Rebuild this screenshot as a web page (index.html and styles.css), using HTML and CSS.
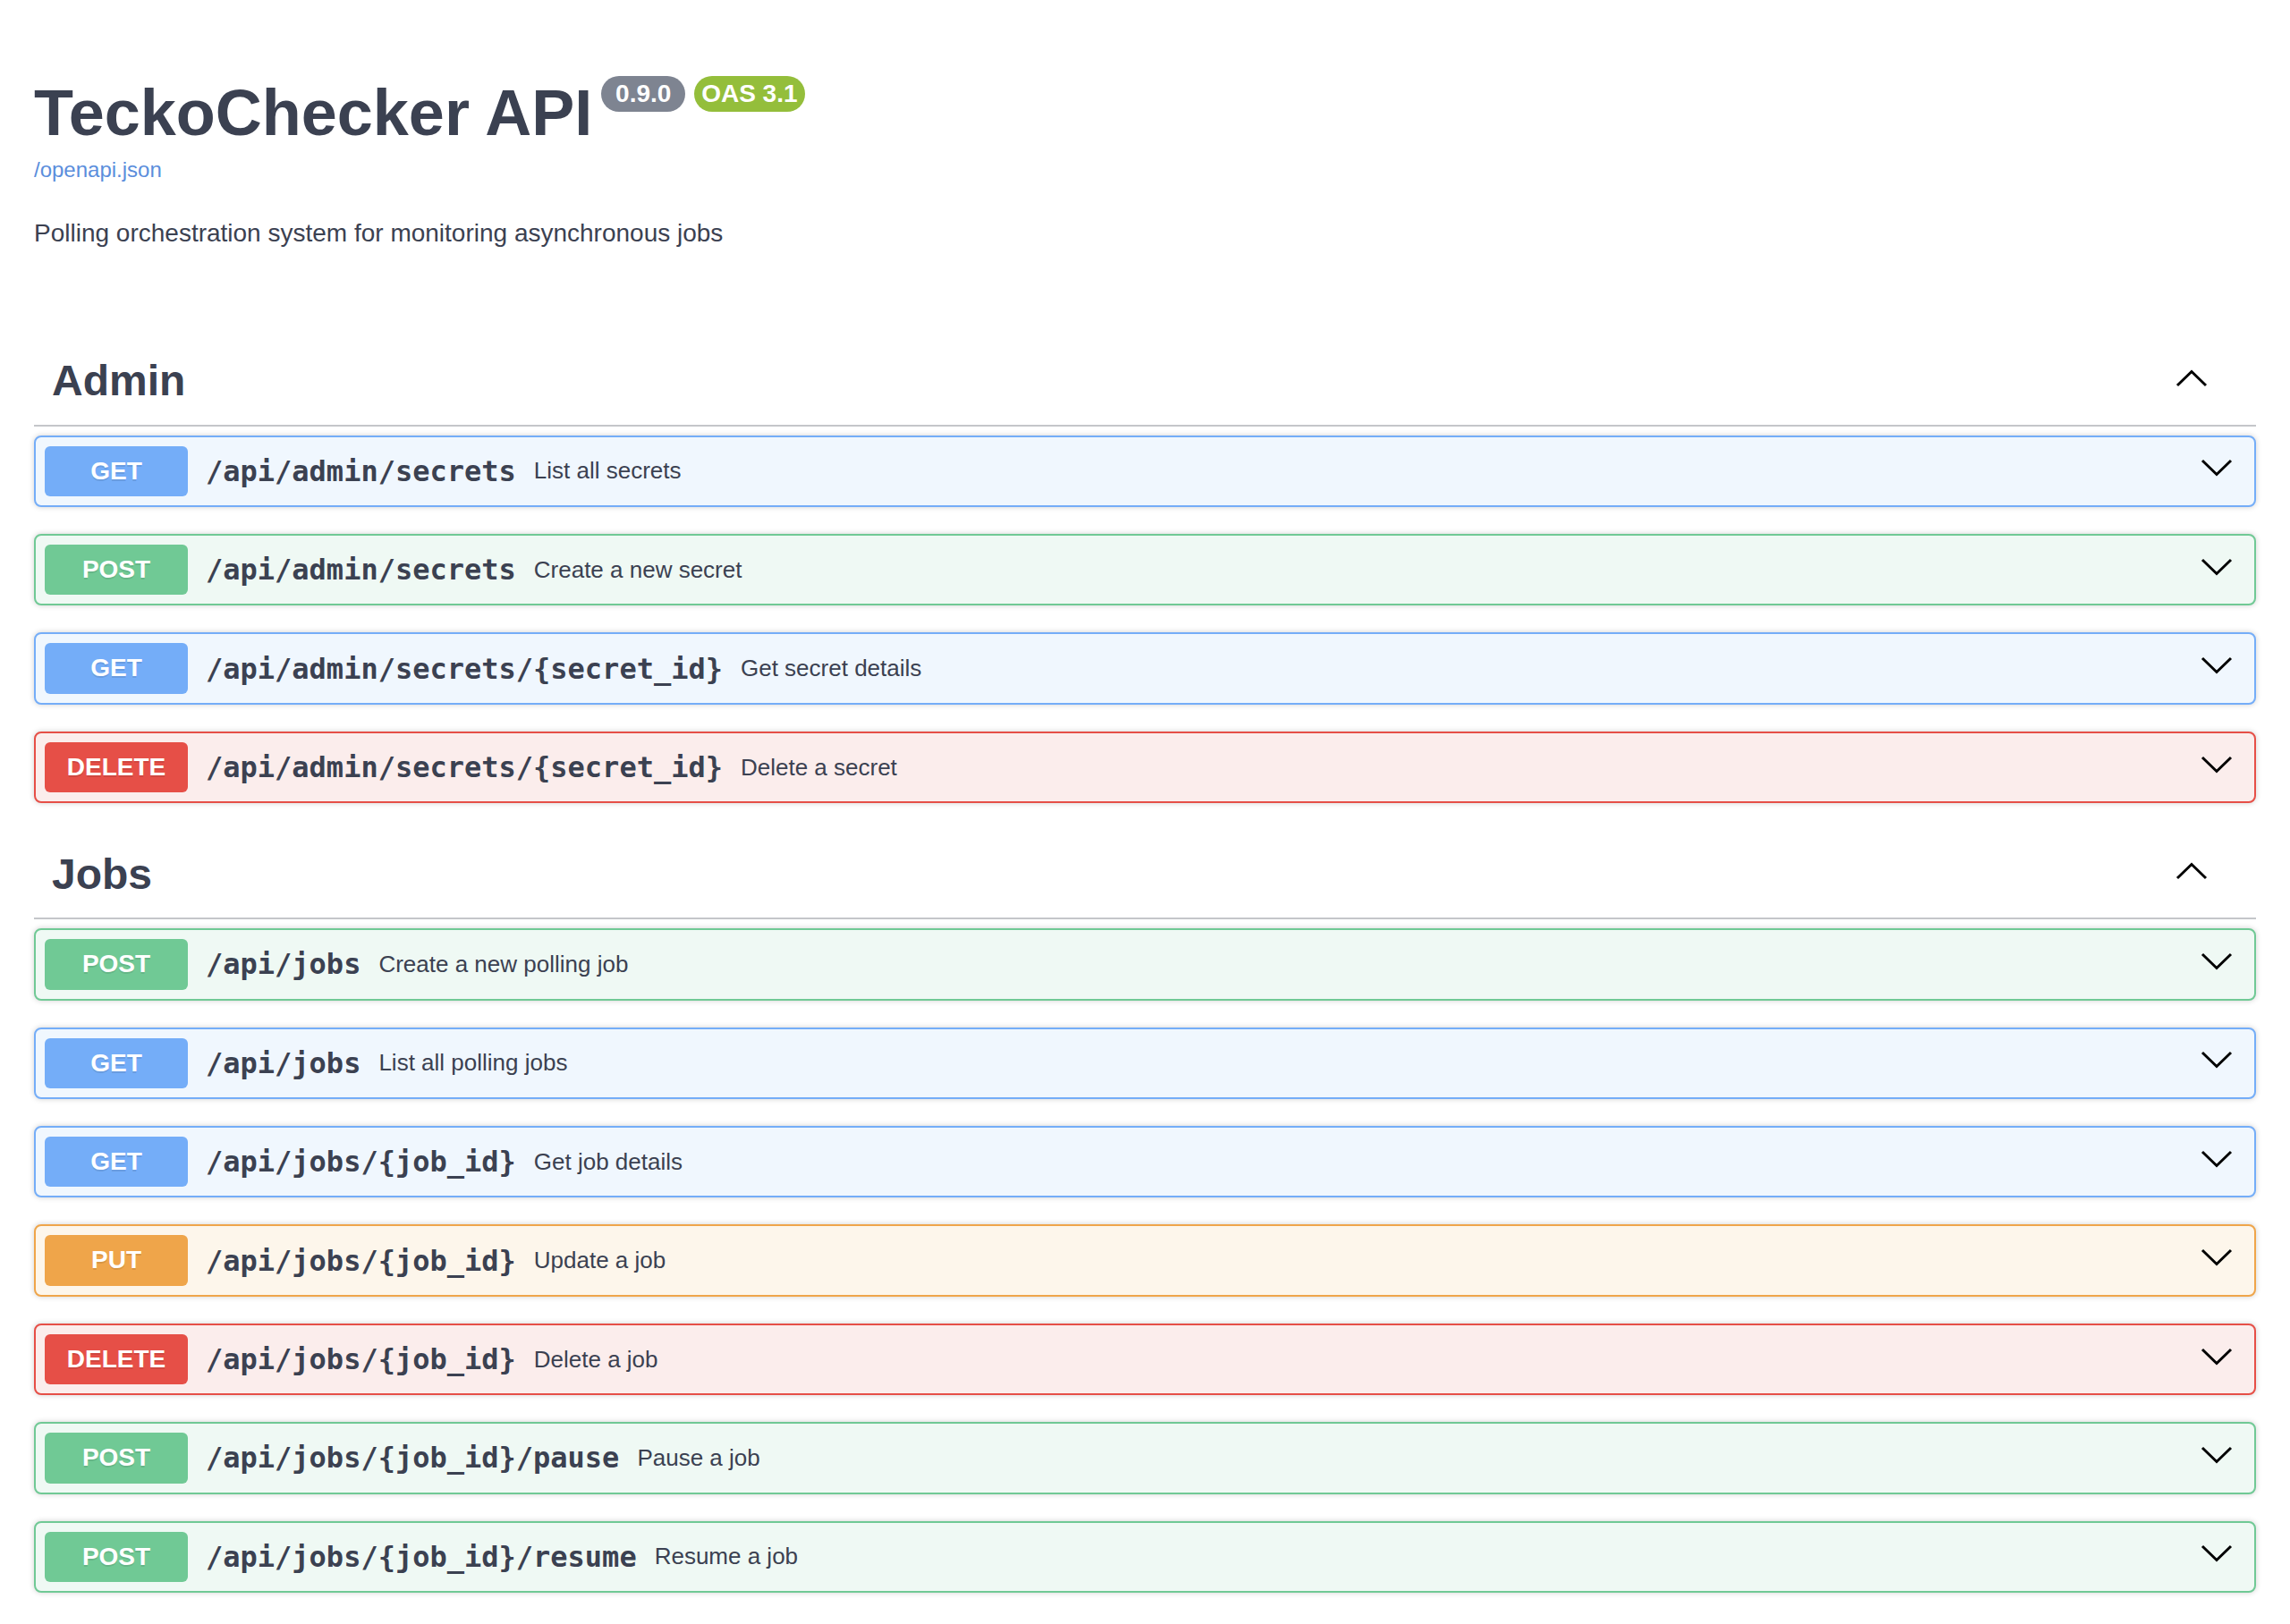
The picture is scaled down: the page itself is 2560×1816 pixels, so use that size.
FILE: index.html
```html
<!DOCTYPE html>
<html lang="en">
<head>
<meta charset="utf-8">
<title>TeckoChecker API - Swagger UI</title>
<link rel="stylesheet" href="styles.css">
</head>
<body>
<div class="wrapper">
  <section class="info">
    <hgroup class="main">
      <h2 class="title"><span class="title-text">TeckoChecker API</span><span class="badges"><small class="badge badge-version"><pre> 0.9.0 </pre></small><small class="badge badge-stamp"><pre>OAS 3.1</pre></small></span></h2>
      <a class="link" href="#">/openapi.json</a>
    </hgroup>
    <div class="description"><p>Polling orchestration system for monitoring asynchronous jobs</p></div>
  </section>

  <div class="tag-section">
    <h3 class="tag"><span class="tag-name">Admin</span><button class="tag-toggle" aria-label="Collapse"><svg class="arrow-up" width="36" height="20" viewBox="0 0 36 20"><polyline points="2,18 18,2.5 34,18"/></svg></button></h3>
    <div class="ops">
      <div class="op op-get"><span class="method">GET</span><span class="path">/api/admin/secrets</span><span class="desc">List all secrets</span><svg class="arrow-down" width="36" height="20" viewBox="0 0 36 20"><polyline points="2,2 18,17.5 34,2"/></svg></div>
      <div class="op op-post"><span class="method">POST</span><span class="path">/api/admin/secrets</span><span class="desc">Create a new secret</span><svg class="arrow-down" width="36" height="20" viewBox="0 0 36 20"><polyline points="2,2 18,17.5 34,2"/></svg></div>
      <div class="op op-get"><span class="method">GET</span><span class="path">/api/admin/secrets/{secret_id}</span><span class="desc">Get secret details</span><svg class="arrow-down" width="36" height="20" viewBox="0 0 36 20"><polyline points="2,2 18,17.5 34,2"/></svg></div>
      <div class="op op-delete"><span class="method">DELETE</span><span class="path">/api/admin/secrets/{secret_id}</span><span class="desc">Delete a secret</span><svg class="arrow-down" width="36" height="20" viewBox="0 0 36 20"><polyline points="2,2 18,17.5 34,2"/></svg></div>
    </div>
  </div>

  <div class="tag-section">
    <h3 class="tag"><span class="tag-name">Jobs</span><button class="tag-toggle" aria-label="Collapse"><svg class="arrow-up" width="36" height="20" viewBox="0 0 36 20"><polyline points="2,18 18,2.5 34,18"/></svg></button></h3>
    <div class="ops">
      <div class="op op-post"><span class="method">POST</span><span class="path">/api/jobs</span><span class="desc">Create a new polling job</span><svg class="arrow-down" width="36" height="20" viewBox="0 0 36 20"><polyline points="2,2 18,17.5 34,2"/></svg></div>
      <div class="op op-get"><span class="method">GET</span><span class="path">/api/jobs</span><span class="desc">List all polling jobs</span><svg class="arrow-down" width="36" height="20" viewBox="0 0 36 20"><polyline points="2,2 18,17.5 34,2"/></svg></div>
      <div class="op op-get"><span class="method">GET</span><span class="path">/api/jobs/{job_id}</span><span class="desc">Get job details</span><svg class="arrow-down" width="36" height="20" viewBox="0 0 36 20"><polyline points="2,2 18,17.5 34,2"/></svg></div>
      <div class="op op-put"><span class="method">PUT</span><span class="path">/api/jobs/{job_id}</span><span class="desc">Update a job</span><svg class="arrow-down" width="36" height="20" viewBox="0 0 36 20"><polyline points="2,2 18,17.5 34,2"/></svg></div>
      <div class="op op-delete"><span class="method">DELETE</span><span class="path">/api/jobs/{job_id}</span><span class="desc">Delete a job</span><svg class="arrow-down" width="36" height="20" viewBox="0 0 36 20"><polyline points="2,2 18,17.5 34,2"/></svg></div>
      <div class="op op-post"><span class="method">POST</span><span class="path">/api/jobs/{job_id}/pause</span><span class="desc">Pause a job</span><svg class="arrow-down" width="36" height="20" viewBox="0 0 36 20"><polyline points="2,2 18,17.5 34,2"/></svg></div>
      <div class="op op-post"><span class="method">POST</span><span class="path">/api/jobs/{job_id}/resume</span><span class="desc">Resume a job</span><svg class="arrow-down" width="36" height="20" viewBox="0 0 36 20"><polyline points="2,2 18,17.5 34,2"/></svg></div>
    </div>
  </div>
</div>
</body>
</html>
```

FILE: styles.css
```css
html, body {
  margin: 0;
  padding: 0;
  background: #ffffff;
  overflow: hidden;
}

body {
  font-family: "Liberation Sans", Arial, sans-serif;
  color: #3b4151;
}

.wrapper {
  box-sizing: border-box;
  width: 100%;
  padding: 0 38px;
}

/* ---------- info ---------- */
.info {
  padding-top: 85px;
}

.main {
  margin: 0;
}

.title {
  display: flex;
  align-items: flex-start;
  margin: 0;
  font-size: 72px;
  line-height: 83px;
  font-weight: 700;
  color: #3b4151;
}

.badges {
  display: flex;
  gap: 10px;
  margin-left: 10px;
}

.badge {
  display: inline-block;
  padding: 4px 8px;
  border-radius: 114px;
  background: #7e8491;
}

.badge-stamp {
  background: #94be3b;
}

.badge pre {
  margin: 0;
  padding: 0;
  font-family: "Liberation Sans", Arial, sans-serif;
  font-size: 28px;
  line-height: 32px;
  font-weight: 700;
  color: #ffffff;
}

.link {
  display: block;
  margin-top: 8px;
  font-size: 24px;
  line-height: 27.6px;
  color: #5b8edc;
  text-decoration: none;
}

.description p {
  margin: 41px 0 0;
  font-size: 28px;
  line-height: 32px;
  color: #3b4151;
}

/* ---------- tags ---------- */
.info + .tag-section {
  margin-top: 100px;
}

.tag {
  display: flex;
  align-items: center;
  margin: 0 0 10px;
  padding: 20px 40px 20px 20px;
  border-bottom: 2px solid rgba(59, 65, 81, 0.3);
  font-size: 48px;
  font-weight: 700;
  color: #3b4151;
}

.tag-name {
  flex: 1 1 auto;
  line-height: normal;
}

.tag-toggle {
  display: flex;
  align-items: center;
  height: 58px;
  padding: 0;
  border: none;
  background: none;
}

.arrow-up,
.arrow-down {
  display: block;
  flex: none;
}

.arrow-up {
  margin: 0 14px 6px 0;
}

.arrow-up polyline,
.arrow-down polyline {
  fill: none;
  stroke: #000000;
  stroke-width: 3;
  stroke-linejoin: miter;
  stroke-linecap: butt;
}

/* ---------- operations ---------- */
.ops {
  display: flex;
  flex-direction: column;
}

.op {
  display: flex;
  align-items: center;
  margin: 0 0 30px;
  padding: 10px;
  border: 2px solid #000;
  border-radius: 8px;
  box-shadow: 0 0 6px rgba(0, 0, 0, 0.19);
}

.method {
  flex: none;
  box-sizing: border-box;
  min-width: 160px;
  padding: 12px 0;
  border-radius: 6px;
  font-size: 28px;
  line-height: 32.4px;
  font-weight: 700;
  text-align: center;
  color: #ffffff;
  text-shadow: 0 2px 0 rgba(0, 0, 0, 0.1);
}

.path {
  flex: none;
  padding: 0 20px;
  font-family: "DejaVu Sans Mono", "Liberation Mono", monospace;
  font-size: 32px;
  font-weight: 700;
  color: #3b4151;
}

.desc {
  flex: 1 1 auto;
  font-size: 26px;
  color: #3b4151;
}

.arrow-down {
  margin: 0 14px 7px 0;
}

.op-get {
  border-color: #74adf8;
  background: #f0f7fe;
}
.op-get .method {
  background: #74adf8;
}

.op-post {
  border-color: #70c995;
  background: #eff9f4;
}
.op-post .method {
  background: #70c995;
}

.op-put {
  border-color: #efa54a;
  background: #fdf6eb;
}
.op-put .method {
  background: #efa54a;
}

.op-delete {
  border-color: #e64f47;
  background: #fbedec;
}
.op-delete .method {
  background: #e64f47;
}
```
